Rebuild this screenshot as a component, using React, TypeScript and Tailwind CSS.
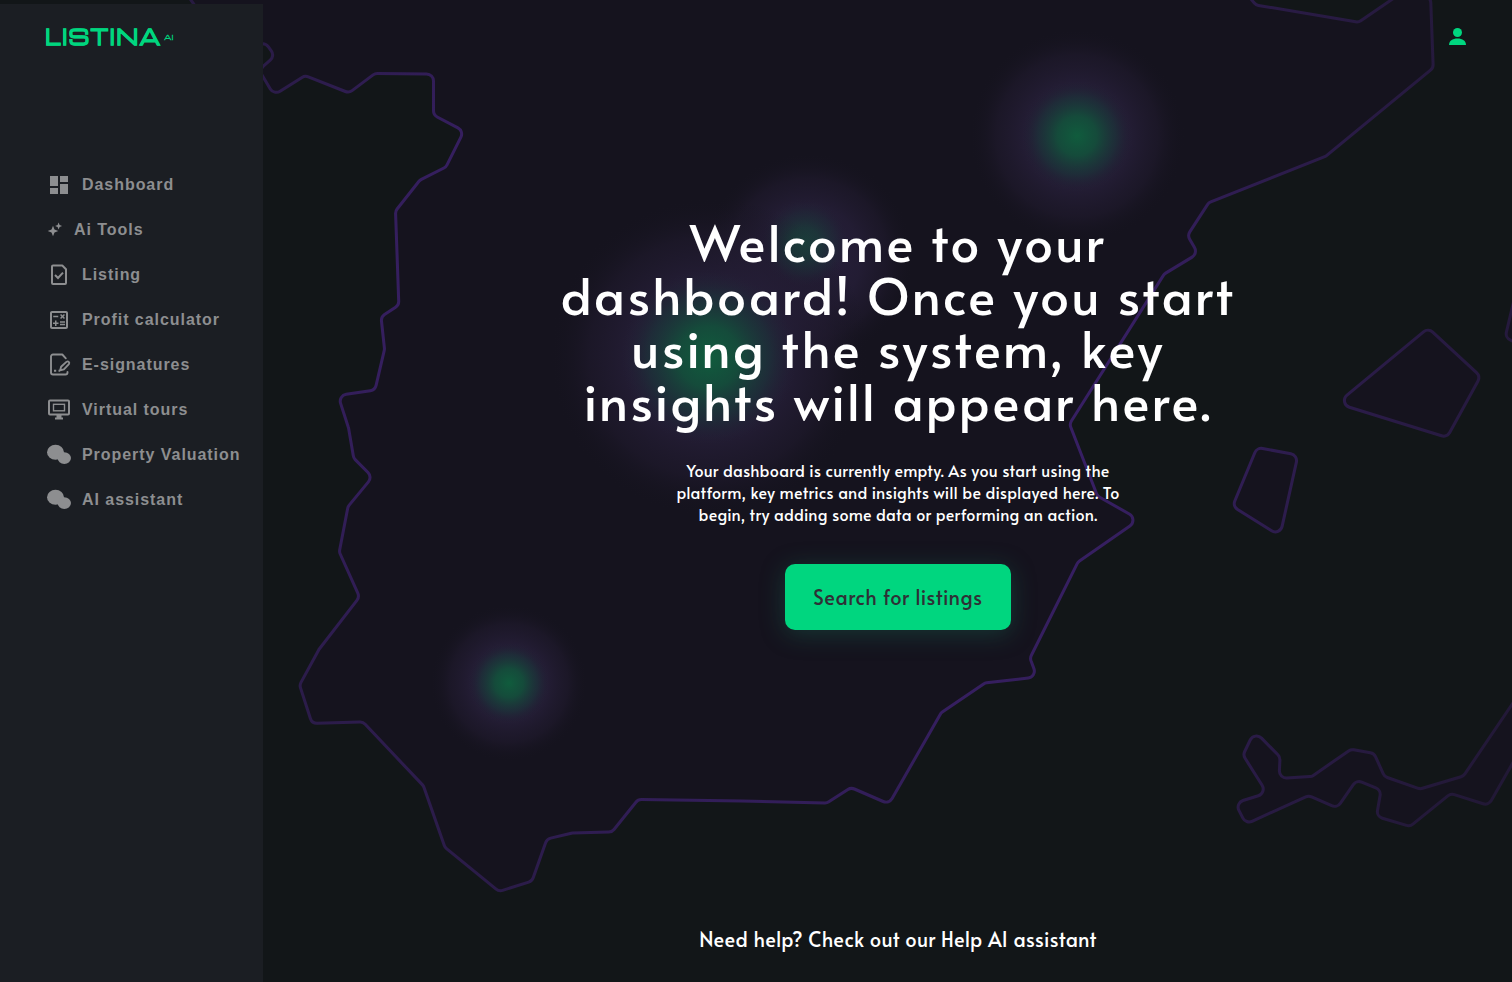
import type { ReactNode } from "react";
import { MdDashboard, MdOutlineCalculate } from "react-icons/md";

type Point = [number, number];

/** Closed polygon outline whose corners are rounded with circular arcs. */
function roundedPath(points: Point[], radius: number): string {
  const n = points.length;
  const parts: string[] = [];
  for (let i = 0; i < n; i++) {
    const [px, py] = points[(i + n - 1) % n];
    const [x, y] = points[i];
    const [nx, ny] = points[(i + 1) % n];
    const la = Math.hypot(px - x, py - y);
    const lb = Math.hypot(nx - x, ny - y);
    const ax = (px - x) / la;
    const ay = (py - y) / la;
    const bx = (nx - x) / lb;
    const by = (ny - y) / lb;
    const angle = Math.acos(Math.max(-1, Math.min(1, ax * bx + ay * by)));
    const t = Math.min(radius / Math.tan(angle / 2), la / 2, lb / 2);
    const r = t * Math.tan(angle / 2);
    const sweep = ax * by - ay * bx < 0 ? 1 : 0;
    parts.push(
      `${i ? "L" : "M"}${(x + ax * t).toFixed(1)} ${(y + ay * t).toFixed(1)}`,
      `A${r.toFixed(1)} ${r.toFixed(1)} 0 0 ${sweep} ${(x + bx * t).toFixed(1)} ${(y + by * t).toFixed(1)}`,
    );
  }
  return parts.join("") + "Z";
}

const mainland: Point[] = [
  [181, -14], [198, 10], [240, 45], [266, 43.5], [275, 56], [259, 70], [274, 95], [305, 75.5],
  [349, 93], [375, 73.5], [433.5, 74], [433.5, 115], [464, 131], [446, 167], [420, 180],
  [395.5, 211], [398.8, 305], [381, 317], [384.5, 349.4], [375, 390], [338, 395.5],
  [348.5, 427.8], [353.7, 458], [372.5, 477], [348, 506.5], [339.3, 552], [359.5, 597],
  [319, 649.4], [299.6, 685], [312, 723.5], [363, 722], [423.5, 786], [445, 847.5],
  [499, 891.5], [532, 881], [547, 839], [572, 833], [612, 832], [638, 799.5], [742, 801],
  [827, 803], [851, 787.5], [889, 804], [941, 713], [985, 683], [1037, 677], [1030, 658],
  [1078, 562], [1139, 519.5], [1097.5, 496], [1069.5, 424], [1164.3, 274], [1198, 253.5],
  [1187.5, 235.5], [1208.7, 202.7], [1325.7, 156.3], [1433.2, 68], [1430.5, -4], [1397, -4],
  [1358.5, 22.3], [1256, 5], [1240, -14],
];
const islands: Point[][] = [
  [[1428.2, 328], [1480.5, 376.4], [1447, 437.5], [1337, 403.5]],
  [[1257, 447.5], [1298, 455], [1280, 536], [1232.5, 506.5]],
  [[1515, 296], [1505, 338], [1530, 348], [1540, 300]],
  [
    [1254.5, 731], [1280, 757], [1279, 778.5], [1311.7, 776.5], [1351, 749.3], [1374, 753.3],
    [1384.5, 776.5], [1420.3, 789], [1463.5, 776], [1540, 663], [1560, 680], [1488.5, 805.5],
    [1450.7, 793.5], [1410, 826.5], [1376.5, 816.5], [1381, 790], [1356.5, 780], [1337, 808],
    [1308.7, 795.5], [1246, 824], [1235, 803], [1267, 793], [1243, 755],
  ],
];
const halos = [
  { cx: 1077, cy: 136, r: 108 },
  { cx: 808, cy: 258, r: 106 },
  { cx: 709, cy: 357, r: 160 },
  { cx: 509, cy: 683, r: 79 },
];
const cores = [
  { cx: 1077, cy: 136, r: 56, o: 1 },
  { cx: 805, cy: 243, r: 44, o: 0.5 },
  { cx: 709, cy: 357, r: 88, o: 1 },
  { cx: 509, cy: 683, r: 41, o: 1 },
];

function MapBackdrop() {
  return (
    <svg className="absolute inset-0" width="1512" height="982" viewBox="0 0 1512 982" aria-hidden="true">
      <defs>
        <radialGradient id="coast" gradientUnits="userSpaceOnUse" cx="770" cy="370" r="1000">
          <stop offset="0.35" stopColor="#371f63" />
          <stop offset="0.55" stopColor="#2c1c4b" />
          <stop offset="1" stopColor="#1c162a" />
        </radialGradient>
        <radialGradient id="halo">
          <stop offset="0" stopColor="#2a2140" stopOpacity="0.9" />
          <stop offset="0.5" stopColor="#251e37" stopOpacity="0.85" />
          <stop offset="0.75" stopColor="#201a2e" stopOpacity="0.6" />
          <stop offset="1" stopColor="#15131e" stopOpacity="0" />
        </radialGradient>
        <radialGradient id="core">
          <stop offset="0" stopColor="#105c3d" />
          <stop offset="0.35" stopColor="#13503b" stopOpacity="0.9" />
          <stop offset="0.7" stopColor="#1b363a" stopOpacity="0.6" />
          <stop offset="1" stopColor="#231f35" stopOpacity="0" />
        </radialGradient>
      </defs>
      {[mainland, ...islands].map((shape, i) => (
        <path key={i} d={roundedPath(shape, 7)} fill="#15131e" stroke="url(#coast)" strokeWidth="3" />
      ))}
      {halos.map((h) => (
        <circle key={h.cx} cx={h.cx} cy={h.cy} r={h.r} fill="url(#halo)" />
      ))}
      {cores.map((c) => (
        <circle key={c.cx} cx={c.cx} cy={c.cy} r={c.r} fill="url(#core)" opacity={c.o} />
      ))}
    </svg>
  );
}

function SparklesIcon() {
  return (
    <svg width="16" height="16" viewBox="0 0 16 16" fill="currentColor">
      <path d="M6 3.700 7.500 7.500 11.300 9 7.500 10.500 6 14.300 4.500 10.500.7 9l3.800-1.500zM11.600.6l1 2.500 2.500 1-2.500 1-1 2.500-1-2.500-2.500-1 2.500-1z" />
    </svg>
  );
}
function ListingIcon() {
  return (
    <svg width="24" height="24" viewBox="0 0 24 24" fill="none" stroke="currentColor" strokeWidth="2">
      <path d="M5 3.500a1 1 0 0 1 1-1h9.300L19 6.200V20a1 1 0 0 1-1 1H6A1 1 0 0 1 5 20z" strokeLinejoin="round" />
      <path d="m8 12 3 3 5-5.400" />
    </svg>
  );
}
function SignatureIcon() {
  return (
    <svg width="24" height="24" viewBox="0 0 24 24" fill="none" stroke="currentColor" strokeWidth="1.9" strokeLinecap="round" strokeLinejoin="round">
      <path d="M18.800 5.300 15.300 1.500H6a2 2 0 0 0-2 2v16a2 2 0 0 0 2 2h12.500a2 2 0 0 0 2-2v-.5" />
      <path d="m13.200 17.300.9-3.500 5.300-4.900c1.800-1.300 3.600.4 2.500 2.200l-5 5.300z" />
      <path d="M7 17.700h2.200M11.500 17.700h1.500" strokeLinecap="butt" />
    </svg>
  );
}
function MonitorIcon() {
  return (
    <svg width="24" height="24" viewBox="0 0 24 24" fill="none" stroke="currentColor">
      <rect x="2" y="2.500" width="20" height="14" rx="1" strokeWidth="2" />
      <rect x="6.500" y="6.300" width="11" height="6.500" strokeWidth="1.400" />
      <path d="M8 20.500h8" strokeWidth="2" />
      <path d="M12 17v4" strokeWidth="5" />
    </svg>
  );
}
function BubblesIcon() {
  return (
    <svg width="24" height="24" viewBox="0 0 24 24" fill="currentColor">
      <ellipse cx="8.500" cy="9.300" rx="8.500" ry="7.500" />
      <ellipse cx="17.300" cy="15.100" rx="6.700" ry="5.900" />
    </svg>
  );
}

const menu: { label: string; icon: ReactNode }[] = [
  { label: "Dashboard", icon: <MdDashboard size={24} /> },
  { label: "Ai Tools", icon: <SparklesIcon /> },
  { label: "Listing", icon: <ListingIcon /> },
  { label: "Profit calculator", icon: <MdOutlineCalculate size={24} /> },
  { label: "E-signatures", icon: <SignatureIcon /> },
  { label: "Virtual tours", icon: <MonitorIcon /> },
  { label: "Property Valuation", icon: <BubblesIcon /> },
  { label: "AI assistant", icon: <BubblesIcon /> },
];

function Logo() {
  return (
    <a className="flex h-6 items-center whitespace-nowrap font-['Michroma','Orbitron','Inter',sans-serif] text-[#00d67f]">
      <span className="w-[119px]">
        <span className="inline-block origin-left scale-x-[0.905] text-[21.5px] leading-6 font-bold tracking-[1.3px] [-webkit-text-stroke:0.7px_#00d67f]">
          LISTINA
        </span>
      </span>
      <span className="text-[7px] leading-6 [-webkit-text-stroke:0.3px_#00d67f]">AI</span>
    </a>
  );
}

function Sidebar() {
  return (
    <aside className="relative mt-1 w-[263px] shrink-0 bg-[#1b1e23] pt-[21px]">
      <div className="pl-[45px]">
        <Logo />
      </div>
      <nav className="mt-[113px] flex flex-col pl-[47px]">
        {menu.map((item) => (
          <a
            key={item.label}
            className="flex h-[45px] items-center gap-[11px] whitespace-nowrap font-['Liberation_Sans',Arial,sans-serif] text-base font-bold tracking-[0.95px] text-[#8d8e90]"
          >
            {item.icon}
            <span className="pt-px">{item.label}</span>
          </a>
        ))}
      </nav>
    </aside>
  );
}

export default function App() {
  return (
    <div className="relative flex h-[982px] w-[1512px] overflow-hidden bg-[#121618] font-['Alata','Lato',sans-serif] text-white">
      <MapBackdrop />
      <Sidebar />
      <main className="relative flex flex-1 flex-col">
        <header className="flex h-[73px] items-center justify-end pr-[45px]">
          <svg width="19" height="19" viewBox="0 0 19 19" fill="#00d67f">
            <circle cx="9.500" cy="5.500" r="4.500" />
            <path d="M1 18C1 13.800 4.500 11.500 9.500 11.500S18 13.800 18 18z" />
          </svg>
        </header>
        <section className="flex flex-col items-center pt-[142px] pl-[21px] text-center">
          <h1 className="w-[700px] text-[51.2px] leading-[53px] tracking-[2.42px]">
            Welcome to your
            <br />
            dashboard! Once you start
            <br />
            using the system, key
            <br />
            insights will appear here.
          </h1>
          <p className="mt-8 w-[460px] text-base leading-[22px] tracking-[0.32px]">
            Your dashboard is currently empty. As you start using the platform, key metrics and
            insights will be displayed here. To begin, try adding some data or performing an action.
          </p>
          <button className="mt-[39px] h-[66px] w-[226px] rounded-[10px] bg-[#00d67f] text-[20px] tracking-[0.57px] text-[#2f3036] shadow-[0_4px_24px_rgba(25,110,85,0.4)]">
            Search for listings
          </button>
        </section>
        <footer className="mt-auto pb-[28px] pl-[21px] text-center text-[20px] leading-[30px] tracking-[0.4px]">
          Need help? Check out our Help AI assistant
        </footer>
      </main>
    </div>
  );
}
